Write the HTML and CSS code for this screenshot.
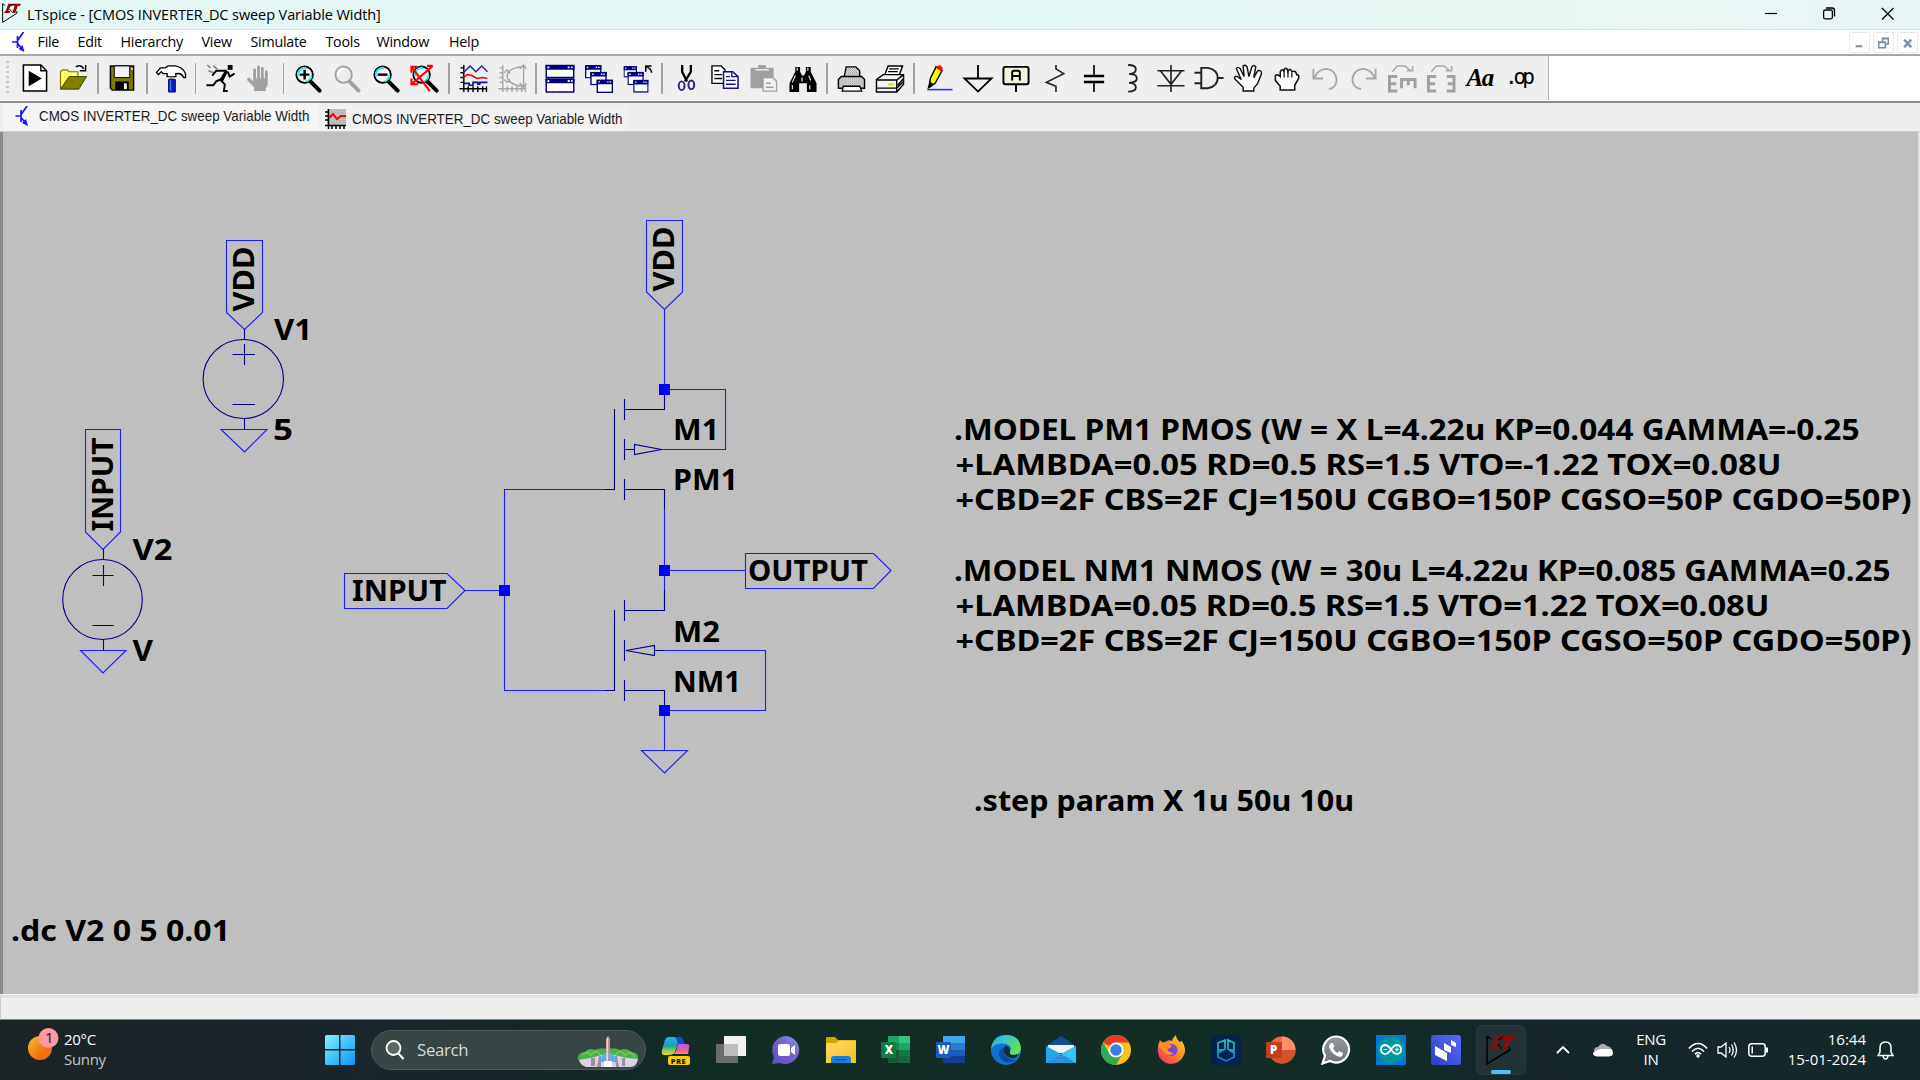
FILE: index.html
```html
<!DOCTYPE html>
<html lang="en">
<head>
<meta charset="utf-8">
<title>LTspice</title>
<link rel="stylesheet" href="styles.css">
</head>
<body>
<svg class="defs" aria-hidden="true">
  <defs>
    <linearGradient id="sun" x1="0" y1="0" x2="1" y2="1"><stop offset="0" stop-color="#f6c02c"/><stop offset=".65" stop-color="#f4700f"/></linearGradient>
    <linearGradient id="win" x1="0" y1="0" x2="1" y2="1"><stop offset="0" stop-color="#80f2ff"/><stop offset="1" stop-color="#0795f8"/></linearGradient>
    <linearGradient id="cop1" x1="0" y1="0" x2="0" y2="1"><stop offset="0" stop-color="#19b5f2"/><stop offset=".5" stop-color="#1f9fb4"/><stop offset=".8" stop-color="#a7cf3c"/><stop offset="1" stop-color="#f4d51b"/></linearGradient>
    <linearGradient id="cop2" x1="0" y1="0" x2="0" y2="1"><stop offset="0" stop-color="#b05bf0"/><stop offset=".6" stop-color="#ee5a9a"/><stop offset="1" stop-color="#fb9a52"/></linearGradient>
    <linearGradient id="chat" x1="0" y1="1" x2="1" y2="0"><stop offset="0" stop-color="#5a4fc0"/><stop offset=".6" stop-color="#7d63c8"/><stop offset="1" stop-color="#79a6ee"/></linearGradient>
    <linearGradient id="fold" x1="0" y1="0" x2="1" y2="1"><stop offset="0" stop-color="#ffdb66"/><stop offset="1" stop-color="#fcbd1d"/></linearGradient>
    <linearGradient id="edge1" x1="0" y1="0" x2="1" y2=".5"><stop offset="0" stop-color="#2fa8e8"/><stop offset=".5" stop-color="#3cc6c8"/><stop offset="1" stop-color="#6be04a"/></linearGradient>
    <linearGradient id="fox" x1="1" y1="0" x2="0" y2="1"><stop offset="0" stop-color="#ffe33c"/><stop offset=".45" stop-color="#ff8a22"/><stop offset="1" stop-color="#f5246f"/></linearGradient>
    <linearGradient id="pg" x1="0" y1="0" x2="0" y2="1"><stop offset="0" stop-color="#1cc5b2"/><stop offset="1" stop-color="#1877d6"/></linearGradient>
    <linearGradient id="indigo" x1="0" y1="1" x2="1" y2="0"><stop offset="0" stop-color="#2c3ccb"/><stop offset="1" stop-color="#5a6cf6"/></linearGradient>
    <linearGradient id="wa" x1="0" y1="0" x2="0" y2="1"><stop offset="0" stop-color="#94999b"/><stop offset="1" stop-color="#6f7577"/></linearGradient>
    <pattern id="dots" width="2" height="2" patternUnits="userSpaceOnUse"><rect width="2" height="2" fill="#fff"/><rect width="1" height="1" fill="#777"/><rect x="1" y="1" width="1" height="1" fill="#999"/></pattern>
    <symbol id="transistor" viewBox="0 0 14 20"><path d="M1 10H6M6.500 4V16M7 8L12.500 0M7 12L12 18" fill="none" stroke="#1414f5" stroke-width="1.700"/><path d="M13.500 20L7.500 17L11.500 13Z" fill="#1414f5"/></symbol>
    <symbol id="ltlogo" viewBox="0 0 30 30"><path d="M1 1V29L24 15L23 12M1 1L5 4" fill="none" stroke="#000" stroke-width="1.500"/><path d="M10 1H15L10 12H13L12 15H3L5 12H6ZM15 1H30L28 5L25 4L21 15L16 15L20 4L14 4Z" fill="#8b0a0a"/><path d="M12 5L17 2M12 9L16 14" stroke="#201010" stroke-width="1.500"/></symbol>
    <symbol id="lens" viewBox="0 0 30 30"><circle cx="11.500" cy="11" r="8.500" fill="#f4f4f4" stroke="#000" stroke-width="2"/><path d="M5 13A7 7 0 0 1 13 4M14 18A7 7 0 0 0 18.500 12" fill="none" stroke="#31e6f2" stroke-width="2.200"/><path d="M18 18.500L27 27.500" stroke="#000" stroke-width="4.200" stroke-linecap="round"/></symbol>
    <symbol id="miniwin" viewBox="0 0 17 14"><rect x=".7" y=".7" width="15.600" height="12.600" fill="#fff" stroke="#00007d" stroke-width="1.400"/><path d="M0 0H17V5H0Z" fill="#00007d"/><path d="M2 2.500H4M11 2.500H15" stroke="#fff" stroke-width="1.500" stroke-dasharray="1.500 1"/></symbol>
    <symbol id="axes" viewBox="0 0 30 30"><path d="M5.500 1V29M1 25.500H30M2 4H6M2 9H6M2 14H6M2 19H6M10 23V29M15 23V29M20 23V29M25 23V29M29 23V29" fill="none" stroke-width="1.500"/></symbol>
  </defs>
</svg>

<div class="window">
  <header class="titlebar">
    <svg class="app-icon" viewBox="0 0 30 30" preserveAspectRatio="none"><use href="#ltlogo"/></svg>
    <span class="title">LTspice - [CMOS INVERTER_DC sweep Variable Width]</span>
    <svg class="caption-buttons" width="132" height="20" viewBox="0 0 132 20"><path d="M1 9.500H13" stroke="#000" stroke-width="1.200"/><rect x="59.600" y="6" width="8.800" height="8.800" rx="1.500" fill="none" stroke="#000" stroke-width="1.300"/><path d="M62 4H68Q70.500 4 70.500 6.500V12.500" fill="none" stroke="#000" stroke-width="1.300"/><path d="M118 4L129.500 15.500M129.500 4L118 15.500" stroke="#000" stroke-width="1.300"/></svg>
  </header>

  <nav class="menubar">
    <svg class="doc-icon" width="14" height="20"><use href="#transistor"/></svg>
    <span class="m1">File</span><span class="m2">Edit</span><span class="m3">Hierarchy</span><span class="m4">View</span><span class="m5">Simulate</span><span class="m6">Tools</span><span class="m7">Window</span><span class="m8">Help</span>
    <div class="mdi">
      <svg viewBox="0 0 20 20"><path d="M6 14H13" stroke="#7c8ea3" stroke-width="2.200"/></svg>
      <svg viewBox="0 0 20 20"><path d="M5 9.500H12V15.500H5ZM5 10H12M9 9V5.500H15V11.500H12M9 6H15" fill="none" stroke="#7c8ea3" stroke-width="1.600"/></svg>
      <svg viewBox="0 0 20 20"><path d="M6.500 7L14 15M14 7L6.500 15" stroke="#7c8ea3" stroke-width="2.600"/></svg>
    </div>
  </nav>

  <div class="toolbar-row">
    <div class="toolbar">
      <i class="grip"></i>
      <svg viewBox="0 0 30 30"><path d="M3 1H21L27 7V28H3Z" fill="#fff" stroke="#000" stroke-width="1.600"/><path d="M21 1V7H27" fill="none" stroke="#000" stroke-width="1.400"/><path d="M8.500 7L22 15L8.500 23Z" fill="#000"/></svg>
      <svg viewBox="0 0 30 30"><path d="M1 26V8L3 6H8L10 8H19V13" fill="#ffff6e" stroke="#806f10" stroke-width="1.200"/><path d="M1 26L10 13H28L20 26Z" fill="#808000" stroke="#3e3e00"/><path d="M17 3Q22 0 25 5M27 1V7H21" fill="none" stroke="#000" stroke-width="1.500"/></svg>
      <i class="sep"></i>
      <svg viewBox="0 0 30 30"><path d="M3 2H27V27H5L3 25Z" fill="#7e7a00" stroke="#000" stroke-width="1.500"/><path d="M7 2H23V14H7Z" fill="#f2f2f2" stroke="#000"/><path d="M8 18H22V27H8Z" fill="#000"/><path d="M17 20H20V26H17Z" fill="#f2f2f2"/><path d="M24.500 4H26V6H24.500Z" fill="#fff"/></svg>
      <i class="sep"></i>
      <svg viewBox="0 0 30 30"><path d="M0 9L4 4H9L12 2H19Q27 3 30 10V14H28Q26 9 20 10V13H11V10H7L5 8L2 11Z" fill="#fff" stroke="#000" stroke-width="1.400"/><path d="M13 13H18V16H13Z" fill="#999"/><path d="M12.500 16H19.500V29H12.500Z" fill="#0a1ec8" stroke="#000080"/><path d="M14.500 17V28" stroke="#3c70ff" stroke-width="1.500"/></svg>
      <i class="sep"></i>
      <svg viewBox="0 0 30 30"><path d="M23 1H28V6H23Z" fill="#000"/><path d="M22 7H11L7 12M22 7L17 17M23 8L25 13L30 10M18 15L11 18L8 22H1M15 16L20 21L19 28H23" fill="none" stroke="#000" stroke-width="2"/><path d="M20 7L14 17L18 18L23 8Z" fill="#000"/><path d="M2 1L5 4M8 2L12 5M3 7L8 9" stroke="#777" stroke-width="1.500"/></svg>
      <svg viewBox="0 0 30 30"><path d="M10 28V24L3 17Q2 14 5 14L9 18V6Q10.500 3 12 6V14H13V3Q14.500 0 16 3V14H17V4Q18.500 2 20 4V14H21V8Q22.500 5 24 8V22L22 25V28Z" fill="#a0a0a0"/><path d="M12.500 6V15M16.500 5V15M20.500 6V15" stroke="#efefef"/></svg>
      <i class="sep"></i>
      <svg viewBox="0 0 30 30"><use href="#lens"/><path d="M6.500 11H16.500M11.500 6V16" stroke="#000" stroke-width="2.500"/></svg>
      <svg viewBox="0 0 30 30"><circle cx="11.500" cy="11" r="8.500" fill="#ececec" stroke="#a0a0a0" stroke-width="2"/><path d="M6 12A6 6 0 0 1 12 5" fill="none" stroke="#fff" stroke-width="2"/><path d="M18 18.500L27 27.500" stroke="#a0a0a0" stroke-width="4" stroke-linecap="round"/></svg>
      <svg viewBox="0 0 30 30"><use href="#lens"/><path d="M6.500 11H16.500" stroke="#000" stroke-width="2.500"/></svg>
      <svg viewBox="0 0 30 30"><use href="#lens"/><path d="M1 3L20 28M23 2L1 21M1 9V3H7M1 15V21H8M17 2H23" fill="none" stroke="#f00" stroke-width="2.200"/></svg>
      <i class="sep"></i>
      <svg viewBox="0 0 30 30"><use href="#axes" stroke="#000"/><path d="M5 9L12 2L18 8L24 2L30 8" fill="none" stroke="#20209c" stroke-width="1.400"/><path d="M5 14L9 11L14 12L19 15L25 14L30 15" fill="none" stroke="#f00" stroke-width="1.600"/><path d="M5 20H11V22H15V19H20V21H22V19H30" fill="none" stroke="#10108a" stroke-width="1.700"/></svg>
      <svg viewBox="0 0 30 30"><use href="#axes" stroke="#a6a6a6"/><path d="M27 2V23M23 5L27 1L30 5M23 20L27 24L30 20M24 3Q10 5 10 12.500Q10 20 24 23M7 9L10 6L13 10M7 16L10 19L13 16" fill="none" stroke="#a0a0a0" stroke-width="1.400"/></svg>
      <i class="sep"></i>
      <svg viewBox="0 0 30 30"><path d="M.8 1.500H29.200V14H.8ZM.8 16H29.200V29H.8Z" fill="#fff" stroke="#00007d" stroke-width="1.500"/><path d="M0 1H30V6H0ZM0 15H30V20H0Z" fill="#00007d"/><path d="M2 3.500H4M23 3.500H25M26.500 3.500H28M2 17.500H4M23 17.500H25M26.500 17.500H28" stroke="#fff" stroke-width="2"/></svg>
      <svg viewBox="0 0 30 30"><use href="#miniwin" x="0" y="1" width="18" height="14"/><use href="#miniwin" x="5" y="8" width="19" height="14"/><use href="#miniwin" x="12" y="16" width="18" height="14"/></svg>
      <svg viewBox="0 0 30 30"><use href="#miniwin" x="0" y="1" width="14" height="14"/><use href="#miniwin" x="4" y="8" width="17" height="14"/><use href="#miniwin" x="10" y="16" width="16" height="14"/><path d="M29 9Q29 5 24 3M23 8V2H29" fill="none" stroke="#000" stroke-width="1.600"/></svg>
      <i class="sep"></i>
      <svg viewBox="0 0 30 30"><path d="M11 1V8L16 18M20 1V8L14 18" fill="none" stroke="#000" stroke-width="2.400"/><ellipse cx="10.500" cy="22.500" rx="3" ry="4.500" fill="none" stroke="#23237e" stroke-width="2"/><ellipse cx="20.500" cy="21.500" rx="3" ry="4.500" fill="none" stroke="#23237e" stroke-width="2"/></svg>
      <svg viewBox="0 0 30 30"><path d="M1.500 2H11L15 6V20H1.500Z" fill="#fff" stroke="#000" stroke-width="1.400"/><path d="M4 7H9M4 11H12M4 15H12" stroke="#000" stroke-width="1.400"/><path d="M13.500 8H23L28.500 13V25H13.500Z" fill="#fff" stroke="#141480" stroke-width="1.600"/><path d="M22 8V13H28M16 13H20M16 17H26M16 21H26" fill="none" stroke="#141480" stroke-width="1.400"/></svg>
      <svg viewBox="0 0 30 30"><path d="M1 4H9V1H17V4H25V25H1Z" fill="#a0a0a0"/><path d="M6 6H20" stroke="#ececec" stroke-width="1.500"/><path d="M14 14H24L28 18V28H14Z" fill="#f2f2f2" stroke="#a0a0a0" stroke-width="1.400"/><path d="M17 20H22M17 24H25" stroke="#a0a0a0" stroke-width="1.500"/></svg>
      <svg viewBox="0 0 30 30"><path d="M7 3H12V8L14 12H16L18 8V3H23V8L29 20V29H19V20H11V29H1V20L7 8Z" fill="#000"/><path d="M9 4V7M20 4V7M7 12L4 19M21 12L23 17M4 22V26M22 22V26M14 14V18" stroke="#eee" stroke-width="1.200"/></svg>
      <i class="sep"></i>
      <svg viewBox="0 0 30 30"><path d="M8 13L10 3H20L24 7V13" fill="url(#dots)" stroke="#000" stroke-width="1.400"/><path d="M2 16L5 13H26L29 16V25H2Z" fill="url(#dots)" stroke="#000" stroke-width="1.500"/><path d="M7 23H24L26 28H6Z" fill="#fff" stroke="#000" stroke-width="1.400"/></svg>
      <svg viewBox="0 0 30 30"><path d="M9 13L13 2H28L24 13" fill="#fff" stroke="#000" stroke-width="1.500"/><path d="M14 5H24M13 8H23M12 11H21" stroke="#000" stroke-width="1.300"/><path d="M1 16L8 11H29V21L22 29H1Z" fill="#f5f5f5" stroke="#000" stroke-width="1.500"/><path d="M1 16.500H22L29 11M22 17V29M1 25H22L29 18M23 22L29 15" fill="none" stroke="#000" stroke-width="1.400"/><path d="M13 21H19" stroke="#e6dc00" stroke-width="2"/></svg>
      <i class="sep"></i>
      <div class="parts">
      <svg viewBox="0 0 30 30"><path d="M6 15L12 3L18 7L11 20L5 24Z" fill="#ff0" stroke="#000" stroke-width="1.500"/><path d="M12 4Q14 0 17 2Q20 4 18 8Z" fill="#f00"/><path d="M5 18L10 21L3 26Z" fill="#000"/><path d="M3 26.500H29" stroke="#2a2aff" stroke-width="1.600"/></svg>
      <svg viewBox="0 0 30 30"><path d="M15 1V15M1 15H29L15 28.500Z" fill="none" stroke="#000" stroke-width="1.900"/></svg>
      <svg viewBox="0 0 30 30"><rect x="2" y="3" width="26" height="18" rx="2" fill="#f2f2da" stroke="#000" stroke-width="2"/><path d="M15 21V29M11 17V9Q11 7 13 7H17Q19 7 19 9V17M11 12.500H19" fill="none" stroke="#000" stroke-width="2"/></svg>
      <svg viewBox="0 0 30 30"><path d="M16 1V5L24 10L6 19L16 23V29" fill="none" stroke="#222" stroke-width="1.700"/></svg>
      <svg viewBox="0 0 30 30"><path d="M15 1V12M15 18V29" stroke="#000" stroke-width="1.700"/><path d="M4.500 12.500H25.500M4.500 18.500H25.500" stroke="#000" stroke-width="2.600"/></svg>
      <svg viewBox="0 0 30 30"><path d="M11 1Q19 1 19 5.500Q19 10 12 10.500Q20 10 20 15Q20 19 12 19.500Q19 20 19 24Q19 28.500 11 28.500" fill="none" stroke="#222" stroke-width="1.900"/></svg>
      <svg viewBox="0 0 30 30"><path d="M15 1V29M1 7H29M4 7L15 21L26 7M1 22.500H29" fill="none" stroke="#222" stroke-width="1.700"/></svg>
      <svg viewBox="0 0 30 30"><path d="M0 9H7M0 20H7M24 14.500H30M7 4H14Q24 6 24 14.500Q24 23 14 25H7Z" fill="none" stroke="#222" stroke-width="2"/></svg>
      <svg viewBox="0 0 30 30"><path d="M10 28V24L1 15Q1 12 4 13L8 16L3 5Q4 2 7 5L11 13L10 2Q12 0 14 3L16 13L19 3Q21 0 23 3L21 14L25 7Q29 6 29 10L25 20L21 25V28Z" fill="#fff" stroke="#111" stroke-width="1.500"/></svg>
      <svg viewBox="0 0 30 30"><path d="M8 27V23L3 17V12Q5 10 8 13V8Q10 4 12 8Q12 3 15 5L16 8Q18 3 20 8Q24 6 25 11Q28 11 27 15L23 22V27Z" fill="#fff" stroke="#111" stroke-width="1.600"/><path d="M12 8V14M16 8V14M20 9V14" stroke="#111" stroke-width="1.300"/></svg>
      <svg viewBox="0 0 30 30"><path d="M4 14Q8 5 17 5Q27 7 27 17Q26 25 19 26M3 5V15H13" fill="none" stroke="#a6a6a6" stroke-width="1.900"/></svg>
      <svg viewBox="0 0 30 30"><path d="M26 14Q22 5 13 5Q3 7 3 17Q4 25 12 26M27 5V15H17" fill="none" stroke="#a6a6a6" stroke-width="1.900"/></svg>
      <svg viewBox="0 0 30 30"><path d="M10 13H2V28H10M2 20.500H9" fill="none" stroke="#a0a0a0" stroke-width="3"/><path d="M13 16H30M14.500 16V25M21.500 16V22M28.500 16V25" stroke="#a0a0a0" stroke-width="3"/><path d="M5 8L10 2H18L24 7M20 7H26V2" fill="none" stroke="#a6a6a6" stroke-width="1.500"/></svg>
      <svg viewBox="0 0 30 30"><path d="M10 13H2V28H10M2 20.500H9M21 13H28.500V28H21M28 20.500H22" fill="none" stroke="#a0a0a0" stroke-width="3"/><path d="M5 8L10 2H18L24 7M20 7H26V2" fill="none" stroke="#a6a6a6" stroke-width="1.500"/></svg>
      <span class="aa">Aa</span>
      <span class="op">.op</span>
      </div>
    </div>
  </div>

  <div class="tabs">
    <div class="tab tab-a"><svg width="15" height="20"><use href="#transistor"/></svg><span>CMOS INVERTER_DC sweep Variable Width</span></div>
    <div class="tab tab-b"><svg width="21" height="20" viewBox="0 0 21 20"><path d="M2 0H21V16H2Z" fill="#bdbdbd"/><path d="M3.500 0V20M0 16.500H21M0 3H4M0 7H4M0 11H4M7 16V20M11 16V20M15 16V20M19 16V20" stroke="#000" stroke-width="1.500"/><path d="M4 9L8 5L12 10L16 7H21" fill="none" stroke="#f00" stroke-width="2"/></svg><span>CMOS INVERTER_DC sweep Variable Width</span></div>
  </div>

  <main class="sheet">
    <svg class="schematic" width="1915" height="862" viewBox="3 132 1915 862">
      <g class="wire">
        <path d="M226.500 312.500V240.500H262.500V312.500L244.500 329.500ZM221 429.500H267L244.500 452Z"/>
        <path d="M85.500 532V429.500H120.500V532L103 549.500ZM80.500 650.500H126L103 673Z"/>
        <path d="M646.500 292V220.500H682.500V292L664.500 309.500ZM664.500 309V389.500H725.500V449.500H661"/>
        <path d="M447 573.500H344.500V608.500H447L465 590.500ZM465 590.500H504.500M605 489.500H504.500V690.500H605"/>
        <path d="M664.500 509V610M664.500 570.500H745.500M873.500 553.500H745.500V588.500H873.500L891 570.500Z"/>
        <path d="M663 650.500H765.500V710.500H664.500V750.500M641.500 750.500H687.500L664.500 773Z"/>
      </g>
      <g class="device">
        <ellipse cx="243.300" cy="379" rx="40.200" ry="39.500"/>
        <path d="M244.500 329V339.500M232.500 354.500H255M244.500 344V365M232.500 404.500H255M244.500 418.500V429.500"/>
        <ellipse cx="102.500" cy="599.500" rx="39.800" ry="40"/>
        <path d="M103.500 549V559.500M92.500 575.500H113.500M103.500 565V586M92.500 625.500H113.500M103.500 639.500V650.500"/>
        <path d="M614.500 409V489.500H605M624.500 399V420M624.500 439V460M624.500 479V500M624.500 409.500H664.500V395M624.500 449.500H634.500M634.500 444.500V454.500L661.500 449.500ZM624.500 489.500H664.500V509"/>
        <path d="M614.500 610V690.500H605M624.500 600V621M624.500 640V661M624.500 680V701M624.500 610.500H664.500V590M654.500 650.500H664M654.500 645.500V655.500L626 650.500ZM624.500 690.500H664.500V705"/>
      </g>
      <path class="junction" d="M659 384h11v11h-11zM659 565h11v11h-11zM659 705h11v11h-11zM499 585h11v11h-11z"/>
      <g class="label">
        <text x="274" y="340" textLength="38" lengthAdjust="spacingAndGlyphs">V1</text>
        <text x="273" y="440" textLength="20" lengthAdjust="spacingAndGlyphs">5</text>
        <text x="132.500" y="560" textLength="40" lengthAdjust="spacingAndGlyphs">V2</text>
        <text x="132.500" y="661" textLength="20.500" lengthAdjust="spacingAndGlyphs">V</text>
        <text x="352" y="601" textLength="94.500" lengthAdjust="spacingAndGlyphs">INPUT</text>
        <text x="748" y="581" textLength="120" lengthAdjust="spacingAndGlyphs">OUTPUT</text>
        <text x="673" y="440" textLength="46" lengthAdjust="spacingAndGlyphs">M1</text>
        <text x="673" y="490" textLength="65" lengthAdjust="spacingAndGlyphs">PM1</text>
        <text x="673" y="641.500" textLength="47" lengthAdjust="spacingAndGlyphs">M2</text>
        <text x="673" y="691.500" textLength="68" lengthAdjust="spacingAndGlyphs">NM1</text>
        <text transform="translate(253.500 311.500) rotate(-90)" textLength="65" lengthAdjust="spacingAndGlyphs">VDD</text>
        <text transform="translate(113 531.500) rotate(-90)" textLength="94" lengthAdjust="spacingAndGlyphs">INPUT</text>
        <text transform="translate(674 291.500) rotate(-90)" textLength="65" lengthAdjust="spacingAndGlyphs">VDD</text>
        <text x="954" y="440" textLength="905.500" lengthAdjust="spacingAndGlyphs">.MODEL PM1 PMOS (W = X L=4.22u KP=0.044 GAMMA=-0.25</text>
        <text x="955.500" y="475" textLength="826" lengthAdjust="spacingAndGlyphs">+LAMBDA=0.05 RD=0.5 RS=1.5 VTO=-1.22 TOX=0.08U</text>
        <text x="955.500" y="510" textLength="956" lengthAdjust="spacingAndGlyphs">+CBD=2F CBS=2F CJ=150U CGBO=150P CGSO=50P CGDO=50P)</text>
        <text x="954" y="581" textLength="936.500" lengthAdjust="spacingAndGlyphs">.MODEL NM1 NMOS (W = 30u L=4.22u KP=0.085 GAMMA=0.25</text>
        <text x="955.500" y="616" textLength="814" lengthAdjust="spacingAndGlyphs">+LAMBDA=0.05 RD=0.5 RS=1.5 VTO=1.22 TOX=0.08U</text>
        <text x="955.500" y="651" textLength="956" lengthAdjust="spacingAndGlyphs">+CBD=2F CBS=2F CJ=150U CGBO=150P CGSO=50P CGDO=50P)</text>
        <text x="974" y="811" textLength="380" lengthAdjust="spacingAndGlyphs">.step param X 1u 50u 10u</text>
        <text x="11" y="941" textLength="219" lengthAdjust="spacingAndGlyphs">.dc V2 0 5 0.01</text>
      </g>
    </svg>
  </main>
  <div class="statusbar"></div>
</div>

<footer class="taskbar">
  <div class="weather">
    <svg width="36" height="40" viewBox="0 0 36 40"><circle cx="14" cy="20" r="12" fill="url(#sun)"/><circle cx="22.500" cy="10" r="10" fill="#ff99a4"/><text x="19" y="15" class="badge">1</text></svg>
    <div class="weather-text"><span>20°C</span><span class="dim">Sunny</span></div>
  </div>
  <svg class="start" width="30" height="30" viewBox="0 0 30 30"><path d="M1.500 0H14V14H0V1.500Q0 0 1.500 0ZM15.500 0H28.500Q30 0 30 1.500V14H15.500ZM0 15.500H14V30H1.500Q0 30 0 28.500ZM15.500 15.500H30V28.500Q30 30 28.500 30H15.500Z" fill="url(#win)"/></svg>
  <div class="search">
    <svg width="20" height="22" viewBox="0 0 20 22"><circle cx="8.500" cy="9" r="7" fill="#5b6866" stroke="#fff" stroke-width="1.800"/><path d="M13.500 14.500L18.500 20" stroke="#fff" stroke-width="2"/></svg>
    <span>Search</span>
    <svg class="landmark" width="62" height="32" viewBox="0 0 62 32"><path d="M1 24Q0 16 8 16Q12 11 18 14Q24 11 31 13Q38 11 43 14Q50 11 54 16Q62 16 61 23L56 28H7Z" fill="#4fae4b"/><path d="M5 19L10 16L14 19L19 15L24 19M38 19L43 15L48 19L53 16L58 21" fill="none" stroke="#6cc457" stroke-width="2"/><path d="M2 24L13 22L25 19H37L50 22L61 23Q60 30 54 31H9Q3 29 2 24Z" fill="#d8d3e6"/><path d="M14 22H18V30H14ZM22 20H24V31H20ZM38 20H40L42 31H39ZM45 22H48V30H45Z" fill="#9c8c9e"/><path d="M27 17H35L41 26H21Z" fill="#58aee8"/><path d="M29.200 25V3L31 0L32.800 3V25Z" fill="#f0cfc4"/><path d="M31 0L32.800 3V25H31Z" fill="#b88f96"/><path d="M27 25H35V31H27Z" fill="#fff"/></svg>
  </div>
  <div class="apps">
    <svg viewBox="0 0 30 30"><path d="M8 2H18Q21 2 22 6L23 8H17L14 17Q12 20 8 20H3Q0 20 1 15L4 5Q5 2 8 2Z" fill="url(#cop1)"/><path d="M13 2H18Q21 2 22 7L24 9H17Q16 3 13 2Z" fill="#1448d4"/><path d="M17 9H26Q29 9 28 13L27 19H12Q15 18 16 13Z" fill="url(#cop2)"/><rect x="7" y="21" width="22" height="9" rx="2" fill="#ffc90e"/><text x="9.800" y="28.500" class="pre">PRE</text></svg>
    <svg viewBox="0 0 30 30"><path d="M0 9H22V28H0Z" fill="#6b6b6b"/><path d="M8 1H30V21H8Z" fill="#f1f1f1"/><path d="M8 9H22V21H8Z" fill="#bcbcbc"/></svg>
    <svg viewBox="0 0 30 30"><path d="M15 1A14 14 0 1 1 9 28L1 29L3 22A14 14 0 0 1 15 1Z" fill="url(#chat)"/><rect x="7" y="9" width="12" height="12" rx="2.500" fill="#fff"/><path d="M20 13L24 10V20L20 17Z" fill="#fff"/></svg>
    <svg viewBox="0 0 30 30"><path d="M0 3Q0 2 1 2H9L12 5H29Q30 5 30 7V11H0Z" fill="#dd9f05"/><path d="M0 8H10L13 5.500H30V28H0Z" fill="url(#fold)"/><path d="M5 28V24Q5 21 8 21H22Q25 21 25 24V28Z" fill="#1681d8"/><path d="M9 24.700H21" stroke="#084c94"/></svg>
    <svg viewBox="0 0 30 30"><path d="M7 1H18V8H7Z" fill="#21a366"/><path d="M18 1H29V8H18Z" fill="#33c481"/><path d="M7 8H18V15H7Z" fill="#1b8b50"/><path d="M18 8H29V15H18Z" fill="#21a366"/><path d="M7 15H18V28H7Z" fill="#185c37"/><path d="M18 15H29V21H18Z" fill="#107c41"/><path d="M18 21H29V28H18Z" fill="#1a6840"/><rect y="7" width="15" height="16" rx="1" fill="#107c41"/><text x="3.800" y="19" class="office">X</text></svg>
    <svg viewBox="0 0 30 30"><path d="M7 1H29V8H7Z" fill="#41a5ee"/><path d="M7 8H29V15H7Z" fill="#2b7cd3"/><path d="M7 15H29V21H7Z" fill="#185abd"/><path d="M7 21H29V28H7Z" fill="#103f91"/><rect y="7" width="15" height="16" rx="1" fill="#185abd"/><text x="1.500" y="19" class="office">W</text></svg>
    <svg viewBox="0 0 30 30"><circle cx="15" cy="15" r="15" fill="#0d73cf"/><path d="M0 14Q2 0 15 0Q29 0 30 14Q29 20 22 20Q18 20 19 17Q22 11 15 9Q5 7 0 14Z" fill="url(#edge1)"/><path d="M13 12Q4 17 11 25Q16 30 27 24Q24 26 19 24Q12 21 13 12Z" fill="#12489c"/><path d="M14 11Q19 11 19 16Q18 20 22 20Q25 20 28 19Q25 24 20 23Q13 21 13 15Z" fill="#122d2a"/></svg>
    <svg viewBox="0 0 30 30"><path d="M0 11L15 1L30 11V16H0Z" fill="#0c4f93"/><path d="M2 10H28V18H2Z" fill="#f1f1f1"/><path d="M0 11L15 19L30 11V28H0Z" fill="#26a6e8"/><path d="M15 19L30 11V28L10 22Z" fill="#35c2f4"/><path d="M0 28L15 19L30 28Z" fill="#2c92e0"/></svg>
    <svg viewBox="0 0 30 30"><circle cx="15" cy="15" r="15" fill="#fbc116"/><path d="M15 15L2 7.500A15 15 0 0 1 28 7.500H15Z" fill="#e33b2e"/><path d="M2 7.500A15 15 0 0 0 15 30L21.500 18.750L15 22.500L8.500 18.750Z" fill="#2da94f"/><circle cx="15" cy="15" r="7.500" fill="#fff"/><circle cx="15" cy="15" r="5.800" fill="#3b7ded"/></svg>
    <svg viewBox="0 0 30 30"><path d="M4 5Q6 8 9 7Q13 4 16 6Q17 2 20 0Q20 4 24 7Q26 7 25 5Q31 13 28 20Q24 29 14 29Q3 27 2 17Q1 11 4 5Z" fill="url(#fox)"/><circle cx="15.500" cy="15" r="6" fill="#7a45d8"/><path d="M4 6Q7 9 10 8L16 11Q14 14 11 14Q13 18 18 18Q14 22 9 18Q6 14 3 12Z" fill="#ff9227"/></svg>
    <svg viewBox="0 0 30 30"><rect width="30" height="30" fill="#04234b"/><path d="M14 14V5L7 8V18L14 14ZM17 14V5L23 8V18L17 14ZM7 18V22L15 26L23 22V18M7 15H14M17 15H23" fill="none" stroke="url(#pg)" stroke-width="1.800"/></svg>
    <svg viewBox="0 0 30 30"><circle cx="16" cy="15" r="13.500" fill="#ed6c47"/><path d="M16 1.500A13.500 13.500 0 0 1 29.500 15H16Z" fill="#ff8f6b"/><path d="M2.500 15H29.500A13.500 13.500 0 0 1 2.500 15Z" fill="#d35230"/><rect y="7" width="16" height="16" rx="1" fill="#c43e1c"/><text x="4" y="19" class="office">P</text></svg>
    <svg viewBox="0 0 30 30"><path d="M15.500 1.500A13 13 0 1 1 9 26L1.500 28.500L4 21A13 13 0 0 1 15.500 1.500Z" fill="url(#wa)" stroke="#fff" stroke-width="2.200"/><path d="M10 8Q8 9 8 12Q11 20 19 22Q22 21 22 18L18 16L16.500 18Q13 16 12 13L13.500 11.500L12 8Z" fill="#fff"/></svg>
    <svg viewBox="0 0 30 30"><rect width="30" height="30" fill="#0078d7"/><circle cx="15" cy="15" r="13.500" fill="#00979c"/><path d="M15 14.500Q12 10 9 10Q5 10.500 5 14.500Q5 18.500 9 19Q12 19 15 14.500Q18 10 21 10Q25 10.500 25 14.500Q25 18.500 21 19Q18 19 15 14.500Z" fill="none" stroke="#fff" stroke-width="1.800"/><path d="M7.500 14.500H11M19 14.500H23M21 12.500V16.500" stroke="#fff" stroke-width="1.200"/></svg>
    <svg viewBox="0 0 30 30"><rect width="30" height="30" rx="3" fill="url(#indigo)"/><path d="M4 11L16 18V26L4 20ZM13 8L20 12V18L13 15ZM20 5L25 8V12L20 10Z" fill="#fff"/></svg>
    <div class="active-app"><svg viewBox="0 0 30 30"><use href="#ltlogo"/></svg></div>
  </div>
  <div class="tray">
    <svg class="chev" width="14" height="10" viewBox="0 0 14 10"><path d="M1 8L7 2L13 8" fill="none" stroke="#fff" stroke-width="1.800"/></svg>
    <svg class="cloud" width="20" height="14" viewBox="0 0 20 14"><path d="M1 8Q1 4 5 4Q9-2 14 3Q19 4 19 8L8 12Z" fill="#a9aeb0"/><path d="M2 8L8 6L18 6Q20 7 20 10Q20 13 16 13.500H4Q0 13 0 10Z" fill="#fff"/></svg>
    <div class="lang"><span>ENG</span><span>IN</span></div>
    <svg class="wifi" width="20" height="16" viewBox="0 0 20 16"><path d="M.8 6.500Q10-3.500 19.200 6.500M4 9.500Q10 3 16 9.500M7 12.300Q10 9 13 12.300" fill="none" stroke="#fff" stroke-width="1.600"/><circle cx="10" cy="14" r="1.700" fill="#fff"/></svg>
    <svg class="vol" width="21" height="18" viewBox="0 0 21 18"><path d="M1 6V12H4L9 16V2L4 6ZM12 6Q14 9 12 12M14.500 3.500Q18 9 14.500 14.500M17 1.500Q22 9 17 16.500" fill="none" stroke="#fff" stroke-width="1.300"/></svg>
    <svg class="batt" width="21" height="14" viewBox="0 0 21 14"><rect x=".8" y=".8" width="16.400" height="12.400" rx="3" fill="none" stroke="#fff" stroke-width="1.500"/><path d="M3.500 3.500H5V10.500H3.500ZM18 4.500H20V9.500H18Z" fill="#fff"/></svg>
    <div class="clock"><span>16:44</span><span>15-01-2024</span></div>
    <svg class="bell" width="17" height="19" viewBox="0 0 17 19"><path d="M1 14.500L3 11V7Q3 1 8.500 1Q14 1 14 7V11L16 14.500ZM6 15Q6.500 18 8.500 18Q10.500 18 11 15" fill="none" stroke="#fff" stroke-width="1.500"/></svg>
  </div>
</footer>
</body>
</html>
```
FILE: styles.css
```css
* { box-sizing: border-box; }
body {
  margin: 0;
  width: 1920px;
  height: 1080px;
  overflow: hidden;
  display: flex;
  flex-direction: column;
  background: #efefef;
  font-family: "Open Sans", "Noto Sans", sans-serif;
  color: #000;
}
svg { display: block; flex: none; }
.defs { width: 0; height: 0; position: absolute; }
.window { height: 1020px; display: flex; flex-direction: column; }

.titlebar {
  height: 30px;
  display: flex;
  align-items: center;
  background: linear-gradient(90deg, #e4f6f4, #e3f6f6 55%, #e9f6f2 85%, #e8f5f7);
  border-bottom: 1px solid #d5e2e1;
}
.app-icon { width: 19px; height: 20px; margin: 0 6px 4px 2px; }
.title { font-size: 14.5px; line-height: 20px; letter-spacing: -0.09px; white-space: nowrap; }
.caption-buttons { margin: 0 24px 2px auto; }

.menubar {
  height: 26px;
  display: flex;
  align-items: center;
  background: #fff;
  border-bottom: 2px solid #a8a8a8;
  padding-left: 11px;
  font-size: 14.3px;
  line-height: 20px;
  letter-spacing: -0.25px;
  white-space: nowrap;
}
.menubar span { margin-top: -1px; }
.doc-icon { margin-right: 12.5px; }
.m1 { width: 40px; } .m2 { width: 43px; } .m3 { width: 81px; } .m4 { width: 49px; }
.m5 { width: 75px; } .m6 { width: 51px; } .m7 { width: 72.5px; }
.mdi { margin-left: auto; margin-right: 2px; display: flex; gap: 3px; }
.mdi svg { width: 21px; height: 21px; border: 1px solid #e9e9e9; border-radius: 2px; }

.toolbar-row { height: 47px; background: #fff; border-bottom: 2px solid #8c8c8c; }
.toolbar {
  width: 1549px;
  height: 44px;
  display: flex;
  align-items: center;
  background: #efefef;
  border-right: 1px solid #b4b4b4;
  padding-left: 6px;
}
.grip { width: 3px; height: 34px; margin-right: 6px; background: repeating-linear-gradient(#c4c4c4 0 2px, transparent 2px 5px); }
.toolbar svg { width: 30px; height: 29px; margin: 0 4.5px; overflow: visible; }
.sep { width: 1.5px; height: 31px; margin: 0 3.75px; background: #a0a0a0; flex: none; }
.sep:nth-of-type(-n+5) { margin: 0 4.2px; }
.parts { display: flex; align-items: center; margin-left: 1.5px; }
.parts svg { margin: 0 4.3px; }
.aa { width: 38.6px; text-align: center; font: italic bold 25px/28px "Liberation Serif", serif; letter-spacing: -1.5px; }
.op { width: 38px; text-align: center; font: 21px/24px "DejaVu Sans Mono", monospace; letter-spacing: -4px; margin-top: -3px; }

.tabs {
  height: 29px;
  display: flex;
  align-items: flex-end;
  padding-left: 3px;
  background: #efefef;
  border-bottom: 1px solid #d0d0d0;
  font: 15px/20px "Liberation Sans", sans-serif;
  color: #1a1a1a;
  white-space: nowrap;
}
.tab { display: flex; align-items: center; background: #f5f5f5; }
.tab span { transform: scaleX(0.893); transform-origin: left; }
.tab-a { width: 316px; height: 28px; padding: 0 0 2px 11px; }
.tab-a svg { margin-right: 10px; }
.tab-b { width: 306px; height: 25px; margin-left: 2px; padding-left: 4px; background: #f2f2f2; }
.tab-b svg { margin-right: 6px; }

.sheet {
  height: 862px;
  background: #bfbfbf;
  border-left: 3px solid #8a8a8a;
  border-right: 2px solid #e3e3e3;
}
.wire, .device { fill: none; stroke: #1a1aff; stroke-width: 1.1; }
.device { stroke: #00008b; }
.junction { fill: #00f; }
.label text { font: bold 29px "Noto Sans", sans-serif; fill: #000; }
.statusbar { flex: 1; margin-top: 1px; background: #efefef; border-top: 3px solid #e0e0e0; border-left: 1px solid #ccc; border-bottom: 1px solid #7c8684; }

.taskbar {
  height: 60px;
  display: flex;
  align-items: center;
  background: linear-gradient(90deg, #1b2426, #1a252c 19%, #162628 27%, #122c26 36%, #132c27 73%, #16262c 80%, #142829);
  color: #fff;
  font-size: 15px;
  line-height: 20px;
  letter-spacing: -0.3px;
}
.weather { width: 325px; display: flex; align-items: center; padding-left: 26px; }
.weather svg { margin: 0 2px 4px 0; }
.weather-text { display: flex; flex-direction: column; margin-top: -2px; }
.dim { color: #c3c8ca; }
.badge { font: 15px "Open Sans", sans-serif; fill: #222; }
.search {
  width: 275px;
  height: 40px;
  margin-left: 16px;
  padding: 0 6px 0 13px;
  display: flex;
  align-items: center;
  border-radius: 20px;
  background: #374644;
  border: 1px solid #4c5a58;
  color: #d6dbda;
  font-size: 16.8px;
}
.search span { margin-left: 12px; }
.landmark { margin-left: auto; margin-top: 4px; }
.apps { display: flex; align-items: center; gap: 25px; margin-left: 15px; }
.apps svg { width: 30px; height: 30px; }
.active-app {
  width: 50px;
  height: 50px;
  margin-left: -10px;
  border-radius: 6px;
  background: #223235;
  border: 1px solid #2c3b3d;
  display: flex;
  flex-direction: column;
  align-items: center;
  justify-content: space-between;
  padding-top: 9px;
}
.active-app::after { content: ""; width: 20px; height: 4px; border-radius: 2px; background: #4cc2ff; }
.pre { font: 800 7.5px "Open Sans", sans-serif; letter-spacing: 0.5px; fill: #221c00; }
.office { font: 800 11.5px "Open Sans", sans-serif; letter-spacing: 0; fill: #fff; }
.tray { display: flex; align-items: center; margin-left: 30px; }
.cloud { margin-left: 23px; }
.lang { width: 40px; margin-left: 18px; display: flex; flex-direction: column; text-align: center; }
.wifi { margin-left: 17px; }
.vol { margin-left: 9px; }
.batt { margin-left: 10px; }
.clock { width: 97px; display: flex; flex-direction: column; text-align: right; letter-spacing: 0; }
.lang, .clock { margin-top: -2px; }
.bell { margin-left: 11px; }
```
